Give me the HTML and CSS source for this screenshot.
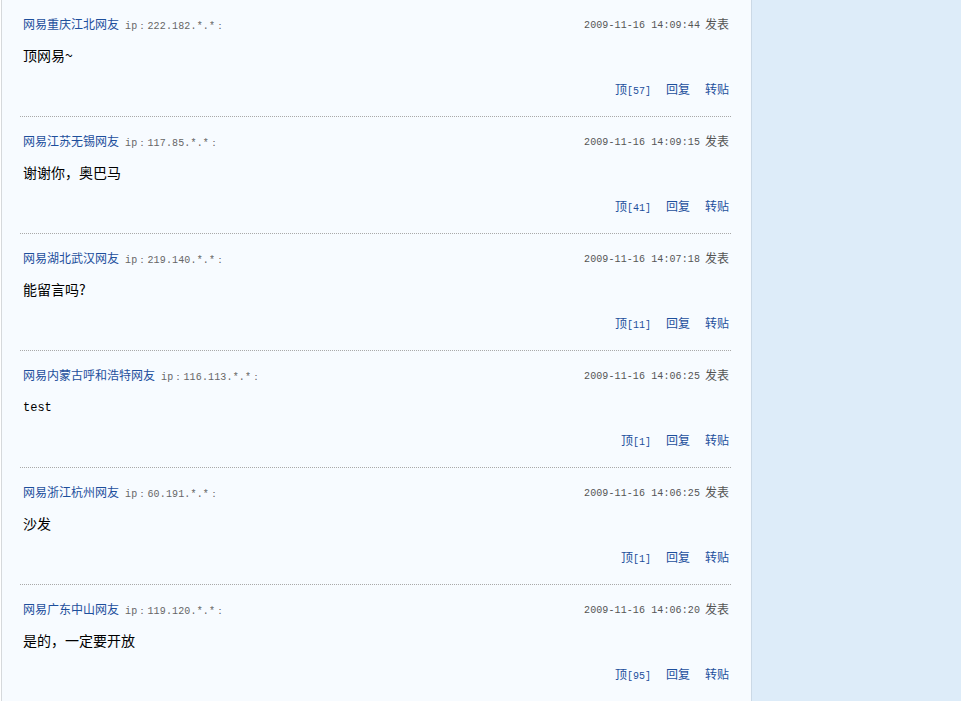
FILE: index.html
```html
<!DOCTYPE HTML>
<html>
    <head>
        <meta charset="utf-8">
        <title>网友评论</title>
        <link rel="stylesheet" href="styles.css">
    </head>
    <body>
        <div class="page">
            <div class="main">
                <div class="list">
                    <div class="item">
                        <div class="head">
                            <div class="who"><a class="name">网易重庆江北网友</a><span class="ip">ip：222.182.*.*：</span></div>
                            <div class="time"><span class="num">2009-11-16 14:09:44</span>发表</div>
                        </div>
                        <div class="body">顶网易~</div>
                        <div class="ops"><a>顶<span class="num">[57]</span></a><a>回复</a><a>转贴</a></div>
                    </div>
                    <div class="item">
                        <div class="head">
                            <div class="who"><a class="name">网易江苏无锡网友</a><span class="ip">ip：117.85.*.*：</span></div>
                            <div class="time"><span class="num">2009-11-16 14:09:15</span>发表</div>
                        </div>
                        <div class="body">谢谢你，奥巴马</div>
                        <div class="ops"><a>顶<span class="num">[41]</span></a><a>回复</a><a>转贴</a></div>
                    </div>
                    <div class="item">
                        <div class="head">
                            <div class="who"><a class="name">网易湖北武汉网友</a><span class="ip">ip：219.140.*.*：</span></div>
                            <div class="time"><span class="num">2009-11-16 14:07:18</span>发表</div>
                        </div>
                        <div class="body">能留言吗?</div>
                        <div class="ops"><a>顶<span class="num">[11]</span></a><a>回复</a><a>转贴</a></div>
                    </div>
                    <div class="item">
                        <div class="head">
                            <div class="who"><a class="name">网易内蒙古呼和浩特网友</a><span class="ip">ip：116.113.*.*：</span></div>
                            <div class="time"><span class="num">2009-11-16 14:06:25</span>发表</div>
                        </div>
                        <div class="body latin">test</div>
                        <div class="ops"><a>顶<span class="num">[1]</span></a><a>回复</a><a>转贴</a></div>
                    </div>
                    <div class="item">
                        <div class="head">
                            <div class="who"><a class="name">网易浙江杭州网友</a><span class="ip">ip：60.191.*.*：</span></div>
                            <div class="time"><span class="num">2009-11-16 14:06:25</span>发表</div>
                        </div>
                        <div class="body">沙发</div>
                        <div class="ops"><a>顶<span class="num">[1]</span></a><a>回复</a><a>转贴</a></div>
                    </div>
                    <div class="item">
                        <div class="head">
                            <div class="who"><a class="name">网易广东中山网友</a><span class="ip">ip：119.120.*.*：</span></div>
                            <div class="time"><span class="num">2009-11-16 14:06:20</span>发表</div>
                        </div>
                        <div class="body">是的，一定要开放</div>
                        <div class="ops"><a>顶<span class="num">[95]</span></a><a>回复</a><a>转贴</a></div>
                    </div>
                </div>
            </div>
            <div class="side"></div>
        </div>
    </body>
</html>
```

FILE: styles.css
```css
html, body {
    margin: 0;
    height: 100%;
    background: #fff;
}

body {
    font-family: "Noto Sans CJK SC", "Liberation Sans", sans-serif;
    font-size: 12px;
    color: #000;
    overflow: hidden;
}

.page {
    display: flex;
    height: 100%;
    padding-left: 1px;
}

.main {
    flex: none;
    width: 749px;
    border-left: 1px solid #d6d9dc;
    border-right: 1px solid #cbd9e6;
    background: #f7fbff;
}

.side {
    flex: 1;
    background: #ddecf9;
}

.list {
    width: 711px;
    margin-left: 18px;
}

.item {
    padding: 16px 2px 19px 3px;
    border-bottom: 1px dotted #a9a9a9;
}

.head {
    display: flex;
    justify-content: space-between;
    align-items: baseline;
    height: 16px;
    line-height: 16px;
    margin-bottom: 13px;
}

.name {
    color: #1d4f9c;
    font-size: 12px;
}

.ip {
    margin-left: 6px;
    color: #666;
    font-family: "Liberation Mono", monospace;
    font-size: 10px;
    letter-spacing: 0.15px;
}

.time {
    color: #555;
    font-size: 12px;
}

.time .num {
    margin-right: 5px;
    letter-spacing: 0.1px;
    position: relative;
    top: -1px;
}

.num {
    font-family: "Liberation Mono", monospace;
    font-size: 10px;
}

.body {
    height: 20px;
    line-height: 20px;
    font-size: 14px;
    margin-bottom: 16px;
}

.body.latin {
    font-family: "Liberation Mono", monospace;
    font-size: 12px;
    line-height: 24px;
}

.ops {
    display: flex;
    justify-content: flex-end;
    gap: 15px;
    height: 16px;
    line-height: 16px;
}

.ops a {
    color: #1d4f9c;
}

.ops .num {
    font-size: 10px;
}
```
